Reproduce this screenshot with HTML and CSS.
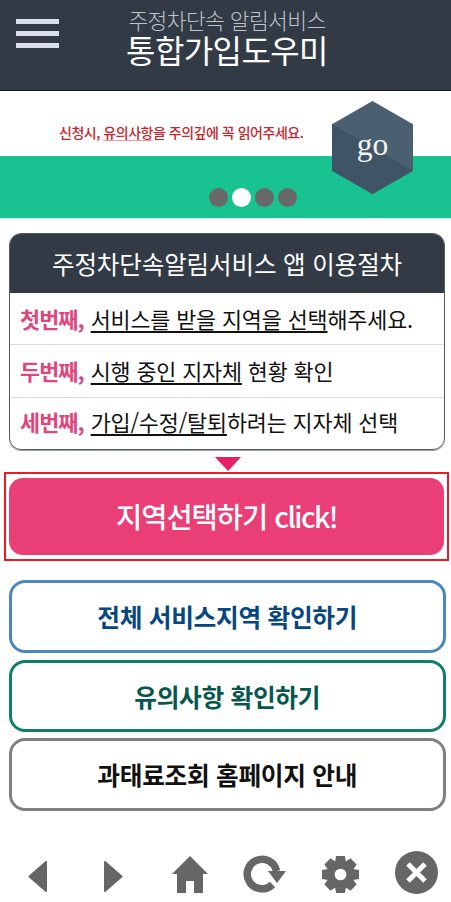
FILE: index.html
```html
<!DOCTYPE html>
<html lang="ko">
<head>
<meta charset="utf-8">
<title>통합가입도우미</title>
<link rel="stylesheet" href="styles.css">
</head>
<body>
<header class="top">
  <div class="burger"><i></i><i></i><i></i></div>
  <div class="titles">
    <div class="sub">주정차단속 알림서비스</div>
    <div class="main">통합가입도우미</div>
  </div>
</header>
<section class="banner">
  <div class="banner-white"><p class="notice">신청시, <u>유의사항</u>을 주의깊에 꼭 읽어주세요.</p></div>
  <div class="banner-green"></div>
  <svg class="hex" width="81" height="93" viewBox="0 0 82 94"><polygon points="41,0 82,23.5 82,70.5 41,94 0,70.5 0,23.5" fill="#4a5f70"/><polygon points="0,23.5 82,70.5 41,94 0,70.5" fill="#3f5465"/><text x="41" y="55" text-anchor="middle" class="go">go</text></svg>
  <div class="dots"><i></i><i class="on"></i><i></i><i></i></div>
</section>
<section class="card">
  <h2 class="card-head">주정차단속알림서비스 앱 이용절차</h2>
  <div class="row"><b>첫번째,</b> <u>서비스를 받을 지역을 선택</u>해주세요.</div>
  <div class="row"><b>두번째,</b> <u>시행 중인 지자체</u> 현황 확인</div>
  <div class="row"><b>세번째,</b> <u>가입/수정/탈퇴</u>하려는 지자체 선택</div>
</section>
<div class="arrow"></div>
<div class="focus"><a class="cta">지역선택하기 <span class="cta-en">click!</span></a></div>
<nav class="links">
  <a class="link blue">전체 서비스지역 확인하기</a>
  <a class="link teal">유의사항 확인하기</a>
  <a class="link gray">과태료조회 홈페이지 안내</a>
</nav>
<footer class="tools">
  <svg class="t-back" width="19" height="31" viewBox="0 0 19 31"><path d="M18 1 L1.5 15.5 L18 30 Z" fill="#666" stroke="#666" stroke-width="2" stroke-linejoin="round"/></svg>
  <svg class="t-fwd" width="19" height="31" viewBox="0 0 19 31"><path d="M1 1 L17.5 15.5 L1 30 Z" fill="#666" stroke="#666" stroke-width="2" stroke-linejoin="round"/></svg>
  <svg class="t-home" width="36" height="37" viewBox="0 0 36 37"><path d="M18 0 L36 18 L31 18 L31 37 L22 37 L22 25 L14 25 L14 37 L5 37 L5 18 L0 18 Z" fill="#666"/></svg>
  <svg class="t-reload" width="43" height="38" viewBox="0 0 43 38"><path d="M29.5 29.5 A14.8 14.8 0 1 1 33.5 16" fill="none" stroke="#666" stroke-width="7.5"/><path d="M25 16 L43 16 L34 28 Z" fill="#666"/></svg>
  <svg class="t-gear" width="37" height="37" viewBox="0 0 38 38"><g fill="#666"><circle cx="19" cy="19" r="14"/><path d="M14.5 0 H23.5 L25 8 H13 Z"/><path d="M14.5 0 H23.5 L25 8 H13 Z" transform="rotate(45 19 19)"/><path d="M14.5 0 H23.5 L25 8 H13 Z" transform="rotate(90 19 19)"/><path d="M14.5 0 H23.5 L25 8 H13 Z" transform="rotate(135 19 19)"/><path d="M14.5 0 H23.5 L25 8 H13 Z" transform="rotate(180 19 19)"/><path d="M14.5 0 H23.5 L25 8 H13 Z" transform="rotate(225 19 19)"/><path d="M14.5 0 H23.5 L25 8 H13 Z" transform="rotate(270 19 19)"/><path d="M14.5 0 H23.5 L25 8 H13 Z" transform="rotate(315 19 19)"/></g><circle cx="19" cy="19" r="6" fill="#fff"/></svg>
  <svg class="t-close" width="43" height="43" viewBox="0 0 43 43"><circle cx="21.5" cy="21.5" r="21.5" fill="#666"/><path d="M13 13 L30 30 M30 13 L13 30" stroke="#fff" stroke-width="5"/></svg>
</footer>
</body>
</html>
```
FILE: styles.css
```css
* { box-sizing: border-box; }
html, body { margin: 0; padding: 0; }
body { width: 451px; height: 902px; overflow: hidden; background: #fff; font-family: "Noto Sans CJK KR", "Noto Sans", sans-serif; color: #111; }
.top { height: 91px; background: #323a46; border-bottom: 1px solid #15181d; display: flex; position: relative; justify-content: center; }
.burger { position: absolute; left: 16px; top: 19px; width: 43px; display: flex; flex-direction: column; gap: 7px; }
.burger i { display: block; height: 5px; background: #d9dee8; }
.titles { text-align: center; padding-top: 4px; margin-left: 3px; }
.sub { font-size: 21.5px; line-height: 31px; color: #c0c4ca; font-weight: 300; letter-spacing: -.6px; }
.main { font-size: 32px; line-height: 29px; color: #fff; font-weight: 400; letter-spacing: -.6px; }
.banner { height: 128px; position: relative; display: flex; flex-direction: column; }
.banner-white { height: 65px; background: #fff; padding: 31px 0 0 59px; }
.notice { margin: 0; font-size: 14px; line-height: 20px; color: #c8242c; letter-spacing: -.48px; font-weight: 500; }
.notice u { text-decoration-color: #e3a0a4; text-underline-offset: 2px; }
.banner-green { flex: 1; background: #19c291; border-bottom: 1px solid #d9ece7; }
.hex { position: absolute; left: 332px; top: 10px; }
.go { font-family: "Liberation Serif", serif; font-size: 32px; fill: #f3f5f6; }
.dots { position: absolute; left: 209px; top: 97px; display: flex; gap: 4px; }
.dots i { width: 19px; height: 19px; border-radius: 50%; background: #686868; }
.dots i.on { background: #fff; }
.card { margin: 14px 6px 0 9px; border: 1px solid #555b63; border-radius: 12px; overflow: hidden; height: 217px; display: flex; flex-direction: column; box-shadow: 0 1px 0 #9a9ea3; }
.card-head { margin: 0; height: 59px; background: #323a46; color: #fff; font-size: 24.5px; font-weight: 400; text-align: center; line-height: 59px; letter-spacing: -.1px; }
.row { flex: 1 1 0; min-height: 0; font-size: 21.8px; padding: 0 0 0 10px; line-height: 51px; border-top: 1px solid #dcdcdc; white-space: nowrap; letter-spacing: -.15px; overflow: hidden; }
.card-head + .row { border-top: 0; }
.row:last-child { line-height: 48px; }
.row b { color: #e0457c; font-weight: 700; letter-spacing: -.9px; margin-right: 1px; }
.row u { text-underline-offset: 3px; text-decoration-thickness: 2px; }
.arrow { width: 0; height: 0; margin: 7px auto 0 215px; border-left: 13px solid transparent; border-right: 13px solid transparent; border-top: 14px solid #e91e63; }
.focus { margin: 1px 2px 0 4px; height: 89px; border: 2px solid #ed1c24; padding: 4px 3px; }
.cta { display: block; height: 77px; background: #ea3e76; border-radius: 14px; color: #fff; font-size: 28.5px; font-weight: 500; text-align: center; line-height: 75px; letter-spacing: -1px; }
.cta-en { letter-spacing: -1.6px; }
.links { margin: 19px 5.5px 0 9px; display: flex; flex-direction: column; gap: 6px; }
.link { display: block; height: 73px; border: 3px solid; border-radius: 16px; font-size: 24.7px; font-weight: 700; text-align: center; line-height: 67px; letter-spacing: -.3px; }
.blue { border-color: #4a87bd; color: #07477f; }
.teal { border-color: #0f7e6a; color: #06574d; height: 72px; margin-top: 1px; line-height: 66px; }
.gray { border-color: #808080; color: #111; }
.tools { margin-top: 40px; height: 43px; padding-left: 28px; display: flex; align-items: flex-end; }
.t-back { margin-bottom: 2px; }
.t-fwd { margin: 0 0 2px 57px; }
.t-home { margin: 0 0 1px 49px; }
.t-reload { margin: 0 0 1px 35px; }
.t-gear { margin: 0 0 1px 36px; }
.t-close { margin-left: 36px; }
```
